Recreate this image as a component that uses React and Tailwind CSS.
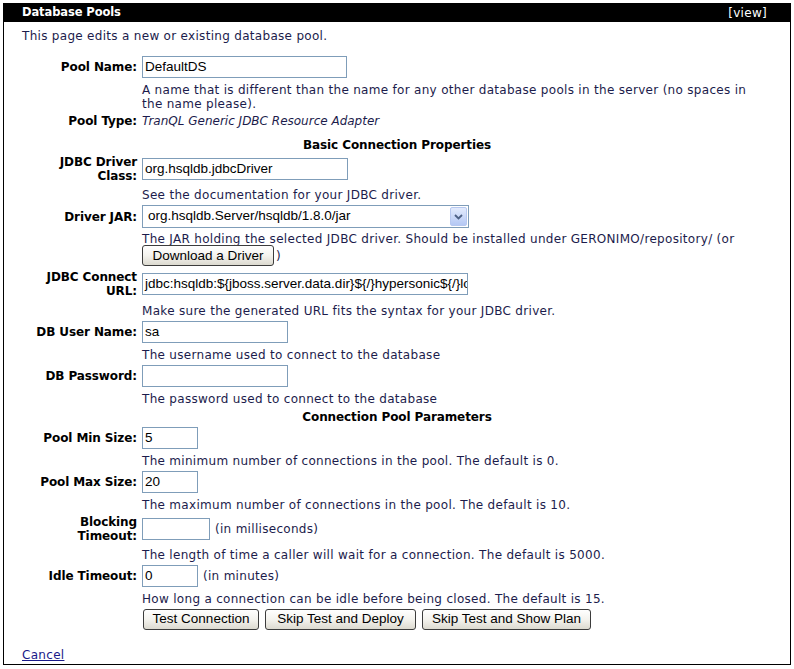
import React from "react";

const txt = "text-[#1c1c4c] tracking-[0.3px]";

function Label({ children }) {
  return (
    <div className="flex items-center justify-end pr-[5px] text-right font-bold text-black leading-[14px] tracking-[-0.1px]">
      <div>{children}</div>
    </div>
  );
}

function Input({ value, w }) {
  return (
    <div
      className={`h-[22px] border border-[#7f9db9] bg-white flex items-center pl-[2px] overflow-hidden whitespace-nowrap text-[13.5px] text-black ${w}`}
      style={{ fontFamily: '"Liberation Sans", Arial, sans-serif' }}
    >
      {value}
    </div>
  );
}

function Btn({ children, w }) {
  return (
    <div
      className={`h-[21px] inline-flex items-center justify-center rounded-[3px] border border-[#3c3c3c] bg-gradient-to-b from-[#ffffff] via-[#f4f3ee] to-[#dcdad0] text-[13.5px] text-black tracking-normal ${w}`}
      style={{ fontFamily: '"Liberation Sans", Arial, sans-serif' }}
    >
      {children}
    </div>
  );
}

function Row({ label, children, className = "py-[2px]" }) {
  return (
    <div className={`grid grid-cols-[120px_1fr] ${className}`}>
      {label ? <Label>{label}</Label> : <div />}
      <div className="flex items-center">{children}</div>
    </div>
  );
}

function Desc({ children, className = "pt-[3px] pb-[1px]" }) {
  return (
    <div className={`grid grid-cols-[120px_1fr] ${className}`}>
      <div />
      <div className={`${txt} leading-[14px]`}>{children}</div>
    </div>
  );
}

function Heading({ children, className = "" }) {
  return (
    <div className={`text-center font-bold text-black leading-[14px] tracking-[-0.1px] ${className}`}>{children}</div>
  );
}

export default function App() {
  return (
    <div
      className="w-[794px] h-[669px] bg-white pt-[3px] pl-[3px]"
      style={{ fontFamily: '"DejaVu Sans", Verdana, sans-serif', fontSize: "12px" }}
    >
      <div className="w-[788px] h-[662px] border border-black flex flex-col">
        <div className="h-[18px] bg-black flex items-center justify-between pl-[18px] pr-[23px] text-white">
          <span className="font-bold text-[11.5px] tracking-[-0.1px]">Database Pools</span>
          <span className="tracking-[0.3px]">[view]</span>
        </div>
        <div className="px-[18px]">
          <div className={`${txt} mt-[7px] leading-[14px]`}>This page edits a new or existing database pool.</div>
          <div className="mt-[11px]">
            <Row label="Pool Name:">
              <Input value="DefaultDS" w="w-[205px]" />
            </Row>
            <Desc>
              A name that is different than the name for any other database pools in the server (no spaces in
              <br />
              the name please).
            </Desc>
            <Row label="Pool Type:" className="pt-[2px] pb-[2px]">
              <span className="italic text-[#1c1c4c] leading-[14px]">TranQL Generic JDBC Resource Adapter</span>
            </Row>
            <Heading className="pt-[8px] pb-[1px]">Basic Connection Properties</Heading>
            <Row label={<>JDBC Driver<br />Class:</>}>
              <Input value="org.hsqldb.jdbcDriver" w="w-[206px]" />
            </Row>
            <Desc>See the documentation for your JDBC driver.</Desc>
            <Row label="Driver JAR:">
              <div
                className="relative h-[23px] w-[327px] border border-[#7f9db9] bg-white flex items-center pl-[5px] text-[13.5px] text-black"
                style={{ fontFamily: '"Liberation Sans", Arial, sans-serif' }}
              >
                org.hsqldb.Server/hsqldb/1.8.0/jar
                <div className="absolute right-[1px] top-[1px] h-[19px] w-[17px] rounded-[2px] border border-[#b7c8f0] bg-gradient-to-b from-[#e3ebfd] to-[#b5c8f4] flex items-center justify-center">
                  <svg width="9" height="6" viewBox="0 0 9 6">
                    <path d="M1 1 L4.5 4.5 L8 1" fill="none" stroke="#4d6185" strokeWidth="1.8" />
                  </svg>
                </div>
              </div>
            </Row>
            <div className="grid grid-cols-[120px_1fr] pt-[2px] pb-[2px]">
              <div />
              <div className={`${txt} leading-[14px]`}>
                <div>The JAR holding the selected JDBC driver. Should be installed under GERONIMO/repository/ (or</div>
                <div className="flex items-center mt-[-1px]">
                  <Btn w="w-[132px]">Download a Driver</Btn>
                  <span className="ml-[2px]">)</span>
                </div>
              </div>
            </div>
            <Row label={<>JDBC Connect<br />URL:</>}>
              <Input value="jdbc:hsqldb:${jboss.server.data.dir}${/}hypersonic${/}localDB" w="w-[326px]" />
            </Row>
            <Desc className="pt-[4px] pb-[1px]">Make sure the generated URL fits the syntax for your JDBC driver.</Desc>
            <Row label="DB User Name:">
              <Input value="sa" w="w-[146px]" />
            </Row>
            <Desc>The username used to connect to the database</Desc>
            <Row label="DB Password:">
              <Input value="" w="w-[146px]" />
            </Row>
            <Desc>The password used to connect to the database</Desc>
            <Heading className="pt-[3px] pb-[1px]">Connection Pool Parameters</Heading>
            <Row label="Pool Min Size:">
              <Input value="5" w="w-[56px]" />
            </Row>
            <Desc>The minimum number of connections in the pool. The default is 0.</Desc>
            <Row label="Pool Max Size:">
              <Input value="20" w="w-[56px]" />
            </Row>
            <Desc>The maximum number of connections in the pool. The default is 10.</Desc>
            <Row label={<>Blocking<br />Timeout:</>}>
              <Input value="" w="w-[68px]" />
              <span className={`${txt} ml-[5px]`}>(in milliseconds)</span>
            </Row>
            <Desc>The length of time a caller will wait for a connection. The default is 5000.</Desc>
            <Row label="Idle Timeout:">
              <Input value="0" w="w-[56px]" />
              <span className={`${txt} ml-[5px]`}>(in minutes)</span>
            </Row>
            <Desc>How long a connection can be idle before being closed. The default is 15.</Desc>
            <Row label="">
              <div className="flex gap-[6px] pl-[1px]">
                <Btn w="w-[116px]">Test Connection</Btn>
                <Btn w="w-[151px]">Skip Test and Deploy</Btn>
                <Btn w="w-[169px]">Skip Test and Show Plan</Btn>
              </div>
            </Row>
          </div>
          <div className="mt-[16px] leading-[14px] tracking-[0.3px]">
            <a className="text-[#1a1a8a] underline" href="#">Cancel</a>
          </div>
        </div>
      </div>
    </div>
  );
}
